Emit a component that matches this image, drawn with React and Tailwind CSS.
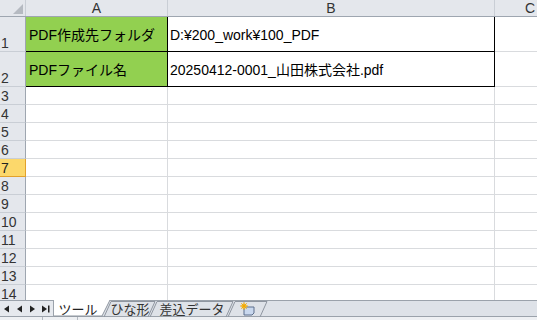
import React from "react";

const font = { fontFamily: '"Liberation Sans", "Noto Sans CJK JP", sans-serif' };
const jp = { fontFamily: '"Noto Sans CJK JP", sans-serif' };

function RowHead({ n, h, selected }) {
  return (
    <div
      className={`w-[26px] shrink-0 flex items-end pl-[1px] border-r border-b ${
        selected
          ? "bg-[#fcd86b] border-r-[#e2a12b] border-b-[#e2a12b] text-[#222]"
          : "bg-[#e4e7ec] border-r-[#9ea6b0] border-b-[#c9ced5] text-[#333]"
      } text-[14px] leading-none`}
      style={{ height: h }}
    >
      <span className="pb-[1px]">{n}</span>
    </div>
  );
}

function EmptyRow({ n, selected }) {
  return (
    <div className="flex h-[18px]">
      <RowHead n={n} h={18} selected={selected} />
      <div className="w-[142px] shrink-0 border-r border-b border-[#d9dbde]" />
      <div className="w-[327px] shrink-0 border-r border-b border-[#d9dbde]" />
      <div className="flex-1 border-b border-[#d9dbde]" />
    </div>
  );
}

export default function App() {
  return (
    <div className="w-[537px] h-[320px] overflow-hidden bg-white relative text-black" style={font}>
      {/* Column headers */}
      <div className="flex h-[17px] bg-[#e4e7ec] border-b border-[#9ea6b0]">
        <div className="w-[26px] shrink-0 border-r border-[#c9ced5] flex items-end justify-end p-[2px]">
          <svg width="10" height="10" viewBox="0 0 10 10">
            <polygon points="10,0 10,10 0,10" fill="#b5bac1" />
          </svg>
        </div>
        <div className="w-[142px] shrink-0 border-r border-[#c9ced5] flex items-center justify-center text-[14px] text-[#333]">A</div>
        <div className="w-[327px] shrink-0 border-r border-[#c9ced5] flex items-center justify-center text-[14px] text-[#333]">B</div>
        <div className="flex-1 flex items-center text-[14px] text-[#333] pl-[30px]">C</div>
      </div>

      {/* Row 1 */}
      <div className="flex h-[35px]">
        <RowHead n="1" h={35} />
        <div className="w-[142px] shrink-0 bg-[#92d050] border-r border-b border-black flex items-center pl-[3px] text-[14px] pt-[2px] whitespace-nowrap">
          PDF作成先フォルダ
        </div>
        <div className="w-[327px] shrink-0 border-r border-b border-black flex items-center pl-[2px] text-[14px] pt-[2px] whitespace-nowrap">
          D:¥200_work¥100_PDF
        </div>
        <div className="flex-1 border-b border-[#d9dbde]" />
      </div>

      {/* Row 2 */}
      <div className="flex h-[35px]">
        <RowHead n="2" h={35} />
        <div className="w-[142px] shrink-0 bg-[#92d050] border-r border-b border-black flex items-center pl-[3px] text-[14px] pt-[2px] whitespace-nowrap">
          PDFファイル名
        </div>
        <div className="w-[327px] shrink-0 border-r border-b border-black flex items-center pl-[2px] text-[14px] pt-[2px] whitespace-nowrap">
          20250412-0001_山田株式会社.pdf
        </div>
        <div className="flex-1 border-b border-[#d9dbde]" />
      </div>

      {[3, 4, 5, 6, 7, 8, 9, 10, 11, 12, 13, 14].map((n) => (
        <EmptyRow key={n} n={n} selected={n === 7} />
      ))}

      {/* Sheet tab bar */}
      <div className="absolute left-0 top-[300px] w-[537px] h-[20px] bg-[#dee2e8] border-t border-[#9ba2ab]">
        <div className="flex h-[16px] items-stretch border-b border-[#9ba2ab]">
          <div className="w-[54px] shrink-0 flex items-center justify-around px-[1px] border-r border-[#9ba2ab] bg-[#e6e9ee]">
            <svg width="8" height="8" viewBox="0 0 8 8"><polygon points="1,4 6,0.5 6,7.5" fill="#222" /></svg>
            <svg width="8" height="8" viewBox="0 0 8 8"><polygon points="1,4 6,0.5 6,7.5" fill="#222" /></svg>
            <svg width="8" height="8" viewBox="0 0 8 8"><polygon points="7,4 2,0.5 2,7.5" fill="#222" /></svg>
            <svg width="9" height="8" viewBox="0 0 9 8"><polygon points="6,4 1,0.5 1,7.5" fill="#222" /><rect x="7" y="0.5" width="1.5" height="7" fill="#222" /></svg>
          </div>
          {/* Active tab */}
          <div className="relative w-[56px] shrink-0 flex items-center justify-center text-[13px] leading-none text-[#222] -mt-[1px] whitespace-nowrap" style={jp}>
            <svg className="absolute inset-0" width="56" height="17" viewBox="0 0 56 17" preserveAspectRatio="none">
              <polygon points="0,0 56,0 48,16 0,16" fill="#ffffff" />
              <polyline points="56,0 48,16 0,16" fill="none" stroke="#8f96a0" strokeWidth="1" />
            </svg>
            <span className="relative pr-[8px]">ツール</span>
          </div>
          <div className="relative w-[52px] shrink-0 -ml-[6px] flex items-center justify-center text-[13px] leading-none text-[#333] whitespace-nowrap" style={jp}>
            <svg className="absolute inset-0" width="52" height="16" viewBox="0 0 52 16">
              <polyline points="0,16 7,0.5 51,0.5 44,16" fill="none" stroke="#8f96a0" strokeWidth="1" />
            </svg>
            <span className="relative">ひな形</span>
          </div>
          <div className="relative w-[84px] shrink-0 -ml-[6px] flex items-center justify-center text-[13px] leading-none text-[#333] whitespace-nowrap" style={jp}>
            <svg className="absolute inset-0" width="84" height="16" viewBox="0 0 84 16">
              <polyline points="0,16 7,0.5 83,0.5 76,16" fill="none" stroke="#8f96a0" strokeWidth="1" />
            </svg>
            <span className="relative">差込データ</span>
          </div>
          <div className="relative w-[40px] shrink-0 -ml-[6px] flex items-center justify-center">
            <svg className="absolute inset-0" width="40" height="16" viewBox="0 0 40 16">
              <polyline points="0,16 7,0.5 39,0.5 32,16" fill="none" stroke="#8f96a0" strokeWidth="1" />
            </svg>
            <svg className="relative" width="16" height="14" viewBox="0 0 16 14">
              <path d="M4 5 h10 v6 l-2 2 h-8 z" fill="#c9d8ee" stroke="#5d6f8c" strokeWidth="1" />
              <circle cx="4" cy="4" r="2.6" fill="#f6c23a" />
              <path d="M4 0 v8 M0 4 h8 M1.2 1.2 l5.6 5.6 M6.8 1.2 l-5.6 5.6" stroke="#f0a500" strokeWidth="0.8" />
            </svg>
          </div>
        </div>
        <div className="flex h-[3px] bg-[#eef0f3]">
          <div className="w-[43px] border-r border-[#b5bac2]" />
          <div className="w-[35px] border-r border-[#b5bac2]" />
        </div>
      </div>
    </div>
  );
}
